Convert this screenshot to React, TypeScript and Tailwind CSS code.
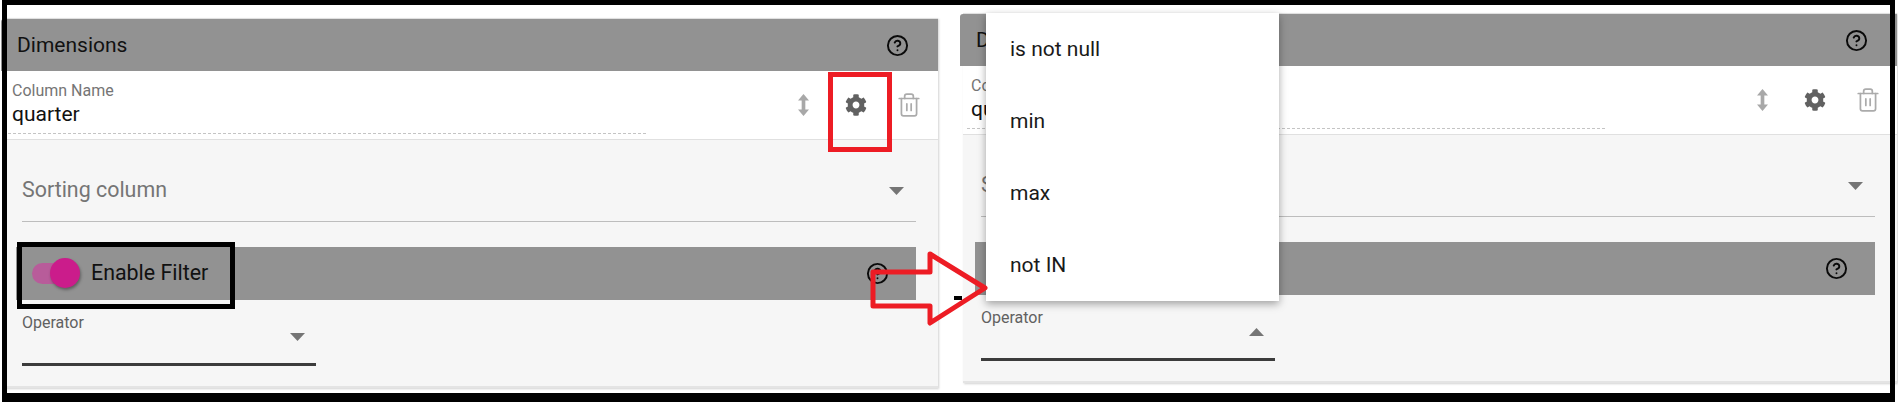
import { FaCog } from "react-icons/fa";
import { CircleHelp, Trash2 } from "lucide-react";

function HelpIcon() {
  return <CircleHelp className="w-[23px] h-[23px] text-[#0a0a0a]" strokeWidth={2} />;
}

function UpDownIcon() {
  return (
    <svg viewBox="0 0 14 24" className="ml-[2px] w-[13px] h-[22px] text-[#a8a8a8]" fill="currentColor">
      <path d="M7 0 L13 7 L9 7 L9 17 L13 17 L7 24 L1 17 L5 17 L5 7 L1 7 Z" />
    </svg>
  );
}

function Caret({ up }: { up?: boolean }) {
  return (
    <svg viewBox="0 0 15 8" className="w-[15px] h-[8px] text-[#757575]" fill="currentColor">
      {up ? <path d="M0 8 L7.5 0 L15 8 Z" /> : <path d="M0 0 L15 0 L7.5 8 Z" />}
    </svg>
  );
}

function Panel({ open }: { open?: boolean }) {
  return (
    <div className="w-[934px] shrink-0 h-[370px] border-t border-[#e0e0e0] shadow-[1px_1px_2px_rgba(0,0,0,0.18)] bg-white">
      <div className="-ml-[3px] h-[52px] bg-[#929292] flex items-center justify-between pl-[16px] pr-[29px] rounded-tl-[3px]">
        <span className="pt-[2px] text-[21px] text-[#111]">Dimensions</span>
        <HelpIcon />
      </div>

      <div className="h-[69px] border-b border-[#e0e0e0] flex items-start pl-[4px]">
        <div className="w-[638px] h-[63px] border-b border-dashed border-[#c4c4c4] pl-[4px] pt-[11px]">
          <div className="text-[16px] leading-[18px] text-[#757575]">Column Name</div>
          <div className="pt-[1px] text-[21px] leading-[26px] text-[#111]">quarter</div>
        </div>
        <div className="ml-auto flex pr-[3px] pt-[22px]">
          <div className="w-[53px] h-[24px] flex items-center justify-center">
            <UpDownIcon />
          </div>
          <div className="w-[53px] h-[24px] flex items-center justify-center">
            <FaCog className="w-[22px] h-[22px] text-[#616161]" />
          </div>
          <div className="w-[53px] h-[24px] flex items-center justify-center">
            <Trash2 className="w-[26px] h-[26px] text-[#ababab]" strokeWidth={1.6} />
          </div>
        </div>
      </div>

      <div className="h-[248px] bg-[#f6f6f6] border-b-2 border-[#e4e4e4] pl-[18px] pr-[22px]">
        <div className="h-[82px] border-b border-[#bdbdbd] flex items-center justify-between pt-[20px] pr-[12px]">
          <span className="text-[21.4px] text-[#757575]">Sorting column</span>
          <Caret />
        </div>

        <div className="mt-[25px] -ml-[6px] h-[53px] bg-[#929292] flex items-center justify-between pl-[16px] pr-[27px]">
          <div className="flex items-center">
            <div className="w-[38px] h-[21px] rounded-full bg-[#b85c9a]" />
            <div className="-ml-[20px] w-[30px] h-[30px] rounded-full bg-[#cb1c8b] shadow-[1px_2px_3px_rgba(0,0,0,0.35)]" />
            <span className="ml-[11px] text-[21.4px] text-[#111]">Enable Filter</span>
          </div>
          <HelpIcon />
        </div>

        <div className="w-[294px] h-[66px] border-b-[3px] border-[#3c3c3c] pt-[14px]">
          <div className="text-[16px] leading-[18px] text-[#616161]">Operator</div>
          <div className="flex justify-end pr-[11px] pt-[1px]">
            <Caret up={open} />
          </div>
        </div>
      </div>
    </div>
  );
}

export default function App() {
  return (
    <div className="relative w-[1898px] h-[402px] overflow-hidden bg-white font-['Roboto',sans-serif]">
      <div className="flex items-start gap-[25px] pl-[4px]">
        <div className="pt-[18px]">
          <Panel />
        </div>
        <div className="pt-[13px]">
          <Panel open />
        </div>
      </div>

      {/* open select menu */}
      <div className="absolute left-[986px] top-[13px] w-[293px] h-[288px] bg-white shadow-[0_3px_8px_rgba(0,0,0,0.35)] flex flex-col pt-[1px] text-[21px] text-[#1a1a1a]">
        <div className="h-[72px] flex items-center pl-[24px]">is not null</div>
        <div className="h-[72px] flex items-center pl-[24px]">min</div>
        <div className="h-[72px] flex items-center pl-[24px]">max</div>
        <div className="h-[71px] flex items-center pl-[24px]">not IN</div>
      </div>

      {/* screenshot annotations */}
      <div className="absolute left-[828px] top-[72px] w-[64px] h-[80px] border-[5px] border-[#ed1c24]" />
      <div className="absolute left-[17px] top-[242px] w-[218px] h-[67px] border-[5px] border-black" />
      <svg className="absolute left-[860px] top-[245px] w-[135px] h-[90px]" viewBox="860 245 135 90" fill="none">
        <path d="M873 272 H930 V254 L985 288 L930 323 V306 H873 Z" stroke="#ed1c24" strokeWidth="5" strokeLinejoin="round" />
      </svg>
      <div className="absolute left-[954px] top-[296px] w-[8px] h-[4px] bg-black" />

      <div className="absolute left-[2px] top-0 w-[1893px] h-[402px] border-t-[5px] border-x-[5px] border-b-[9px] border-black pointer-events-none" />
    </div>
  );
}
